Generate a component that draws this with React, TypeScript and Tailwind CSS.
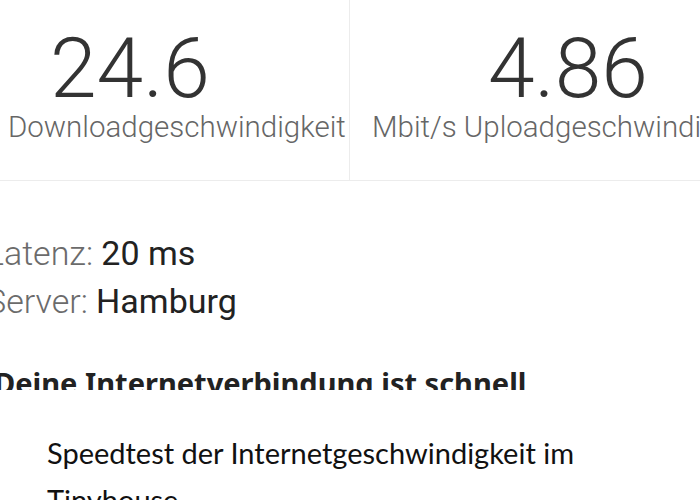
export default function App() {
  return (
    <div className="w-[700px] h-[500px] bg-white overflow-hidden">
      <div className="h-[390px] overflow-hidden" style={{ fontFamily: "Roboto, sans-serif" }}>
        <div className="grid grid-cols-[350px_1fr] h-[181px] border-b border-[#ececec]">
          <div className="border-r border-[#ececec] pt-[27px] overflow-hidden whitespace-nowrap">
            <div className="ml-[50px] text-[84px] leading-none font-light text-[#333]">24.6</div>
            <div className="ml-[8px] mt-[2px] text-[29.5px] leading-none font-light text-[#666]">Downloadgeschwindigkeit</div>
          </div>
          <div className="pt-[27px] overflow-hidden whitespace-nowrap">
            <div className="ml-[138px] text-[84px] leading-none font-light text-[#333]">4.86</div>
            <div className="ml-[22px] mt-[2px] text-[29.5px] leading-none font-light text-[#666]">Mbit/s Uploadgeschwindigkeit</div>
          </div>
        </div>
        <div className="ml-[-14px] mt-[48px]">
          <div className="text-[34px] leading-[48px] whitespace-nowrap">
            <span className="font-light text-[#6b6b6b]">Latenz: </span>
            <span className="text-[#222]">20 ms</span>
          </div>
          <div className="text-[34px] leading-[48px] whitespace-nowrap">
            <span className="font-light text-[#6b6b6b]">Server: </span>
            <span className="text-[#222]">Hamburg</span>
          </div>
        </div>
        <div
          className="ml-[-6px] mt-[43px] text-[29px] font-bold leading-none text-[#222] whitespace-nowrap"
          style={{ fontFamily: "'Noto Sans', sans-serif" }}
        >
          Deine Internetverbindung ist schnell
        </div>
      </div>
      <div
        className="pl-[47px] pt-[39px] text-[29px] leading-[47px] text-[#111] w-[640px]"
        style={{ fontFamily: "Lato, sans-serif" }}
      >
        Speedtest der Internetgeschwindigkeit im Tinyhouse
      </div>
    </div>
  );
}
